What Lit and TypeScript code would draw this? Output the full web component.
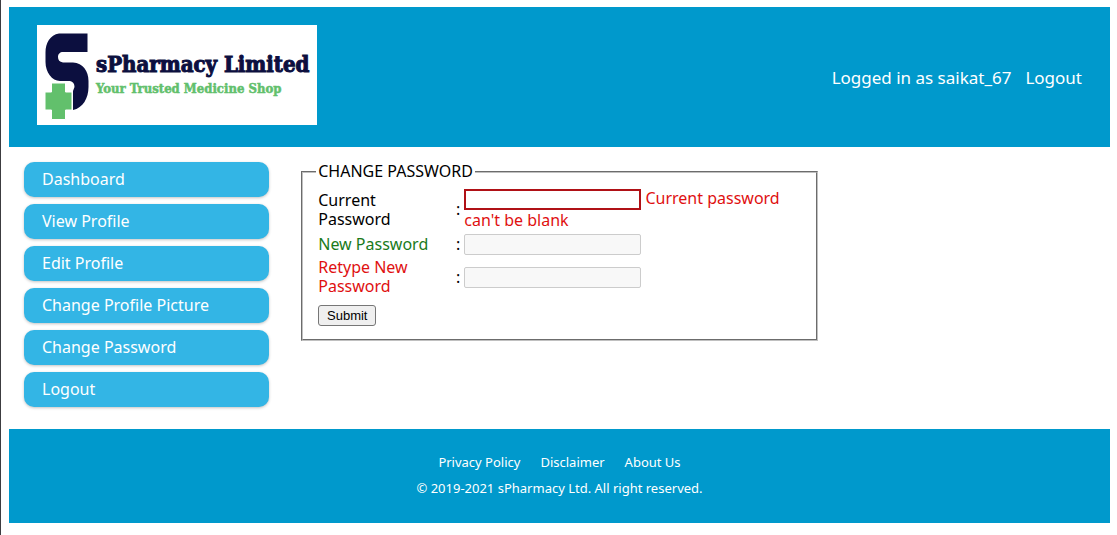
import { LitElement, html, css } from "lit";
import { customElement, property } from "lit/decorators.js";

@customElement("pharmacy-logo")
class PharmacyLogo extends LitElement {
  static styles = css`
    :host {
      display: flex;
      background: #fff;
    }
    svg {
      display: block;
      width: 280px;
      height: 100px;
    }
    .mark {
      fill: #0c0f3f;
    }
    .cross {
      fill: #62c06c;
      stroke: #fff;
      stroke-width: 1px;
    }
    .name,
    .tagline {
      font-family: "DejaVu Serif Condensed", "DejaVu Serif", serif;
      font-weight: 700;
    }
    .name {
      font-size: 22px;
      fill: #0c0f3f;
      stroke: #0c0f3f;
      stroke-width: 1px;
    }
    .tagline {
      font-size: 13px;
      fill: #62c06c;
      stroke: #62c06c;
      stroke-width: 0.5px;
    }
  `;

  render() {
    return html`
      <svg viewBox="0 0 280 100" role="img" aria-label="sPharmacy Limited">
        <path
          class="mark"
          d="M50.5 8.5H22C13 10 8.5 18 8.5 27.5V37C8.5 47 15 56 23 56H33C36 56.5 37.5 59 37.5 62L36 66V85C46 83 51.5 73 51.5 62V56C51.5 46 46 38 36 37.5H26C22.5 37 21 35 21 32C21 29 23 27 26 27H50.5Z"
        />
        <path
          class="cross"
          d="M14.5 58H28.5V67H35V85H28.5V94.5H14.5V85H8V67H14.5Z"
        />
        <text class="name" x="59" y="47">sPharmacy Limited</text>
        <text class="tagline" x="59" y="68">Your Trusted Medicine Shop</text>
      </svg>
    `;
  }
}

@customElement("side-menu")
class SideMenu extends LitElement {
  @property({ attribute: false }) items: string[] = [];

  static styles = css`
    :host {
      display: block;
    }
    .menu {
      display: grid;
      gap: 7px;
      margin: 0;
      padding: 0;
      list-style: none;
    }
    .link {
      display: block;
      padding: 8px 18px;
      border-radius: 10px;
      background: #33b5e5;
      box-shadow: 0 1px 3px rgba(0, 0, 0, 0.24);
      color: #fff;
      line-height: 19px;
      text-decoration: none;
    }
  `;

  render() {
    return html`
      <nav>
        <ul class="menu">
          ${this.items.map(
            (item) => html`<li><a class="link" href="#">${item}</a></li>`
          )}
        </ul>
      </nav>
    `;
  }
}

@customElement("password-form")
class PasswordForm extends LitElement {
  static styles = css`
    :host {
      display: block;
    }
    .box {
      margin: 0;
      padding: 7px 13px 13px;
      border: 2px groove #c0c0c0;
      min-width: 0;
    }
    .legend {
      padding: 0 2px;
      line-height: 19px;
    }
    .rows {
      display: grid;
      grid-template-columns: 120px 18px minmax(0, 1fr);
      column-gap: 4px;
      row-gap: 3px;
      align-items: center;
      padding: 0 2px;
    }
    .label {
      line-height: 19px;
    }
    .valid {
      color: #1a7a1a;
    }
    .invalid {
      color: #e01010;
    }
    .colon {
      justify-self: end;
    }
    .field {
      line-height: 21px;
    }
    .input {
      box-sizing: border-box;
      width: 177px;
      height: 21px;
      margin: 0;
      border: 1px solid #ccc;
      border-radius: 2px;
      background: #f8f8f8;
      vertical-align: middle;
    }
    .input.wrong {
      border: 2px solid #b01116;
      border-radius: 0;
      background: #fff;
    }
    .submit {
      display: block;
      box-sizing: border-box;
      width: 58px;
      height: 21px;
      margin: 9px 2px 0;
      padding: 0;
      border: 1px solid #767676;
      border-radius: 3px;
      background: #efefef;
      color: #000;
      font: 13px/19px "Liberation Sans", sans-serif;
    }
  `;

  render() {
    return html`
      <form>
        <fieldset class="box">
          <legend class="legend">CHANGE PASSWORD</legend>
          <div class="rows">
            <label class="label" for="current">Current Password</label>
            <span class="colon">:</span>
            <div class="field">
              <input class="input wrong" id="current" type="password" aria-describedby="current-error" />
              <span class="invalid" id="current-error">Current password can't be blank</span>
            </div>
            <label class="label valid" for="new">New Password</label>
            <span class="colon">:</span>
            <input class="input" id="new" type="password" />
            <label class="label invalid" for="retype">Retype New Password</label>
            <span class="colon">:</span>
            <input class="input" id="retype" type="password" />
          </div>
          <button class="submit" type="button">Submit</button>
        </fieldset>
      </form>
    `;
  }
}

@customElement("app-root")
class AppRoot extends LitElement {
  static styles = css`
    :host {
      display: block;
      box-sizing: border-box;
      min-height: 100vh;
      padding: 7px 7px 12px 8px;
      border-left: 1px solid #3c3c40;
      background: #fff;
      color: #000;
      font: 16px/19px "Noto Sans", "Open Sans", sans-serif;
    }
    .header {
      display: flex;
      align-items: center;
      justify-content: space-between;
      box-sizing: border-box;
      min-height: 140px;
      padding: 18px 28px;
      background: #09c;
      color: #fff;
    }
    .logo {
      align-self: flex-start;
    }
    .account {
      display: flex;
      gap: 14px;
      font-size: 17px;
    }
    .link {
      color: inherit;
      text-decoration: none;
    }
    .main {
      display: grid;
      grid-template-columns: 25% minmax(0, 1fr);
      padding: 15px 0 22px;
    }
    .menu {
      margin: 0 15px;
    }
    .form {
      max-width: 517px;
      margin: 0 17px;
    }
    .footer {
      display: grid;
      justify-items: center;
      gap: 7px;
      padding: 24px 15px 25px;
      background: #09c;
      color: #fff;
      font-size: 13px;
    }
    .links {
      display: flex;
      gap: 20px;
    }
  `;

  private menu = [
    "Dashboard",
    "View Profile",
    "Edit Profile",
    "Change Profile Picture",
    "Change Password",
    "Logout",
  ];

  render() {
    return html`
      <header class="header">
        <pharmacy-logo class="logo"></pharmacy-logo>
        <div class="account">
          <span>Logged in as saikat_67</span>
          <a class="link" href="#">Logout</a>
        </div>
      </header>
      <main class="main">
        <side-menu class="menu" .items=${this.menu}></side-menu>
        <password-form class="form"></password-form>
      </main>
      <footer class="footer">
        <div class="links">
          <a class="link" href="#">Privacy Policy</a>
          <a class="link" href="#">Disclaimer</a>
          <a class="link" href="#">About Us</a>
        </div>
        <div>© 2019-2021 sPharmacy Ltd. All right reserved.</div>
      </footer>
    `;
  }
}
